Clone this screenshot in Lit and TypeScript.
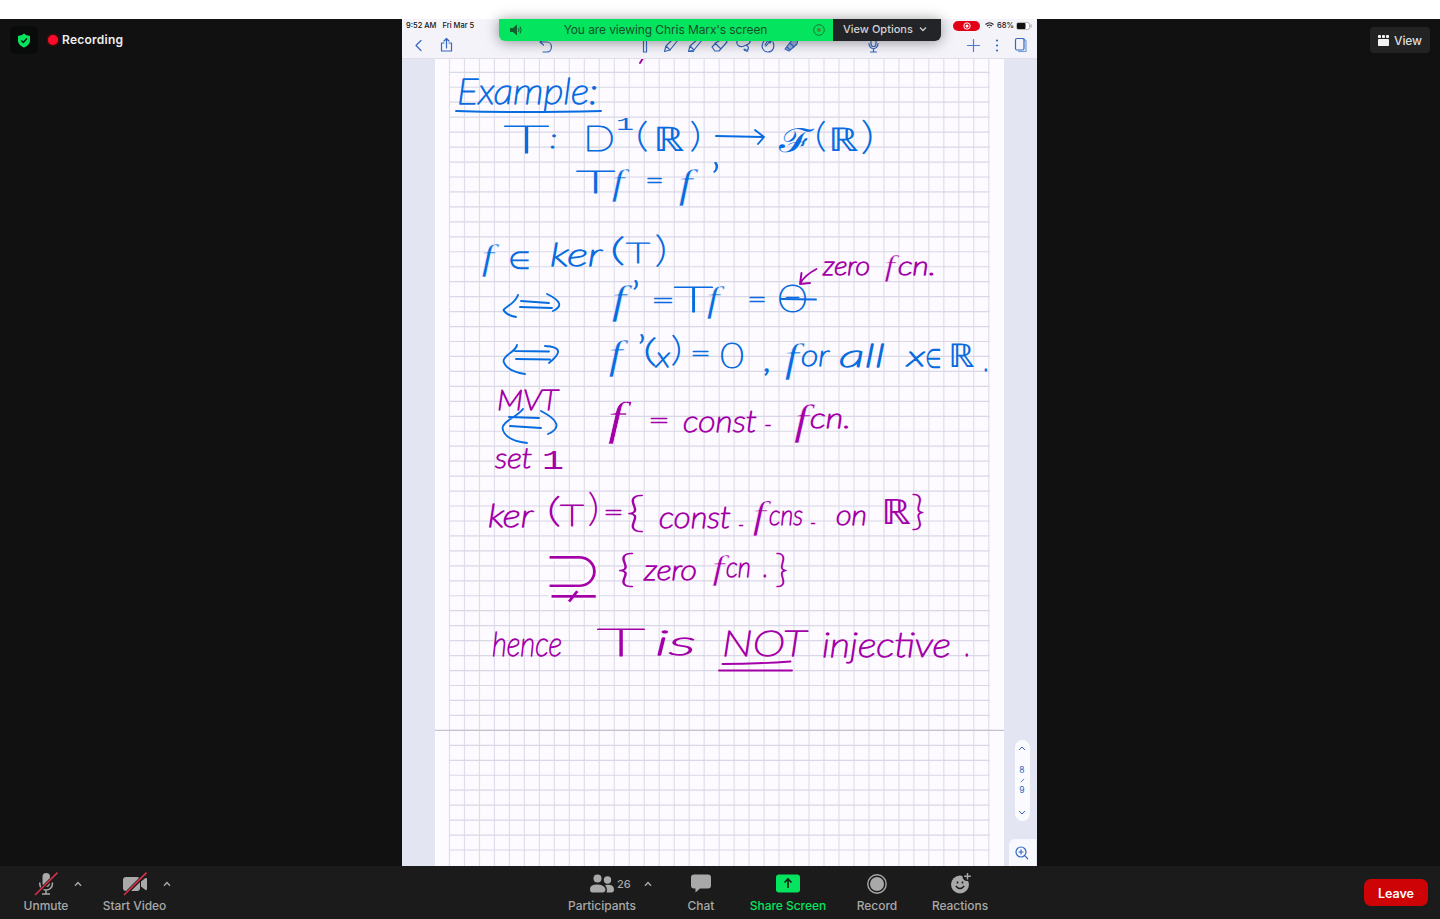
import { LitElement, html, css, svg } from "lit";
import { customElement } from "lit/decorators.js";

type Ink = [text: string, x: number, baseline: number, size: number, width: number, font?: string];

const BLUE: Ink[] = [
  ["Example:", 457, 104, 35, 141],
  ["T", 504, 153, 38, 45, "upright"], [":", 550, 148, 26, 7],
  ["D", 583, 151, 35, 32, "upright"], ["1", 616, 130, 19, 18, "mono"],
  ["(", 636, 147, 34, 12, "upright"], ["ℝ", 653, 151, 34, 31, "math"], [")", 690, 147, 34, 11, "upright"],
  ["ℱ", 779, 152, 33, 34, "math"], ["(", 815, 147, 34, 11, "upright"], ["ℝ", 828, 151, 33, 31, "math"], [")", 861, 149, 38, 13, "upright"],
  ["T", 576, 193, 32, 39, "upright"], ["f", 610, 194, 36, 22, "serif"], ["=", 645, 190, 27, 19, "upright"], ["f", 677, 197, 39, 22, "serif"], ["’", 709, 194, 42, 13, "upright"],
  ["f", 480, 269, 35, 21, "serif"], ["∈", 508, 269, 25, 23, "math"], ["ker", 550, 266, 31, 52],
  ["(", 610, 261, 31, 15, "upright"], ["T", 626, 263, 28, 24, "upright"], [")", 655, 262, 35, 12, "upright"],
  ["f", 610, 313, 41, 22, "serif"], ["’", 630, 309, 38, 11, "upright"], ["=", 651, 310, 27, 24, "upright"], ["T", 674, 312, 36, 39, "upright"],
  ["f", 705, 311, 36, 23, "serif"], ["=", 747, 309, 27, 20, "upright"], ["Θ", 777, 312, 37, 31, "upright"],
  ["f", 607, 368, 39, 25, "serif"], ["’", 636, 363, 38, 11, "upright"], ["(", 643, 362, 31, 14, "upright"], ["x", 656, 367, 28, 14], [")", 671, 361, 34, 11, "upright"],
  ["=", 690, 363, 27, 21, "upright"], ["0", 720, 368, 35, 24, "upright"], [",", 764, 371, 34, 8], ["f", 783, 371, 40, 21, "serif"], ["or", 801, 366, 29, 28],
  ["all", 839, 367, 31, 46], ["x", 907, 366, 27, 18], ["∈", 925, 368, 27, 17, "math"], ["ℝ", 948, 367, 33, 27, "math"], [".", 984, 371, 30, 5],
];

const MAGENTA: Ink[] = [
  ["zero", 823, 275, 25, 47], ["f", 883, 276, 30, 13, "serif"], ["cn.", 898, 275, 25, 38],
  ["MVT", 497, 410, 28, 61], ["set", 495, 468, 28, 37], ["1", 542, 469, 27, 22, "mono"],
  ["f", 606, 434, 47, 32, "serif"], ["=", 648, 430, 27, 22, "upright"],
  ["const", 683, 432, 30, 74], ["-", 764, 433, 24, 8], ["f", 792, 434, 42, 19, "serif"], ["cn.", 810, 428, 27, 41],
  ["ker", 488, 527, 31, 45], ["(", 547, 522, 33, 14, "upright"], ["T", 560, 526, 29, 24, "upright"], [")", 588, 521, 37, 11, "upright"], ["=", 603, 522, 27, 21, "upright"],
  ["{", 626, 527, 42, 19, "upright"], ["const", 659, 528, 29, 72], ["-", 738, 532, 22, 6], ["f", 751, 528, 37, 18, "serif"],
  ["cns", 769, 525, 28, 34], ["-", 810, 530, 22, 6], ["on", 836, 525, 27, 31], ["ℝ", 881, 524, 35, 30, "math"], ["}", 911, 525, 40, 14, "upright"],
  ["⊋", 541, 599, 72, 64, "math eroded"], ["{", 617, 582, 38, 18, "upright"], ["zero", 644, 580, 27, 53], ["f", 711, 579, 34, 16, "serif"],
  ["cn", 726, 577, 27, 25], [".", 763, 577, 30, 5], ["}", 775, 582, 38, 13, "upright"],
  ["hence", 492, 656, 33, 70], ["T", 597, 656, 38, 48, "upright"], ["is", 655, 655, 33, 41], ["NOT", 722, 656, 36, 84],
  ["injective", 822, 657, 33, 129], [".", 965, 656, 32, 5],
];

const ink = (list: Ink[]) => list.map(([t, x, y, size, w, font = "hand"]) =>
  font === "serif"
    ? svg`<text class="serif" x=${x + size * 0.04} y=${y} font-size=${size} textLength=${size * 0.36} lengthAdjust="spacingAndGlyphs">${t}</text>`
    : svg`<text class=${font} x=${x} y=${y} font-size=${size} textLength=${w} lengthAdjust="spacingAndGlyphs">${t}</text>`);

const caret = html`<svg class="caret" width="8" height="6" viewBox="0 0 8 6"><path d="M1 4.8 4 1.6l3 3.2" fill="none" stroke="currentColor" stroke-width="1.4"/></svg>`;

@customElement("ink-page")
class InkPage extends LitElement {
  static styles = css`
    :host { display: block; width: 569px; height: 807px; background: #fdfbff; }
    svg { display: block; }
    .hand, .upright { font-family: Lato, "Open Sans", sans-serif; font-weight: 200; stroke-width: 1.4; stroke-linejoin: round; }
    .upright { stroke-width: 1.1; }
    .hand { font-style: italic; }
    .serif { font-family: "Liberation Serif", serif; font-style: italic; stroke: #fdfbff; stroke-width: .5; }
    .math { font-family: "DejaVu Sans", sans-serif; font-weight: 200; stroke: none; }
    .mono { font-family: "Liberation Mono", monospace; stroke: none; }
    .eroded { stroke: #fdfbff; stroke-width: 2.6; }
    .blue { fill: #086ce0; stroke: #086ce0; }
    .magenta { fill: #a300a8; stroke: #a300a8; }
    .stroke { fill: none; stroke-width: 1.9; stroke-linecap: round; stroke-linejoin: round; }
    .sb { stroke: #086ce0; }
    .sm { stroke: #a300a8; }
  `;
  render() {
    const rows = Array.from({ length: 53 }, (_, i) => 72.3 + i * 14.956);
    const cols = Array.from({ length: 37 }, (_, i) => 449.5 + i * 14.98);
    return html`<svg width="569" height="807" viewBox="435 59 569 807">
      ${cols.map((x) => svg`<path d="M${x} 59V866" stroke="#e1deeb" stroke-width="1.2"/>`)}
      ${rows.map((y) => svg`<path d="M449 ${y}H989.5" stroke="#d8d8e7" stroke-width="1.2"/>`)}
      <path d="M435 730.3H1004" stroke="#c3c4ce" stroke-width="1.2"/>
      <g class="blue">${ink(BLUE)}</g>
      <g class="magenta">${ink(MAGENTA)}</g>
      <g class="stroke sb">
        <path d="M456 111Q520 113 601 111"/>
        <path d="M716 136L763 137M755 130L764 137L758 144"/>
        <path d="M518 295C515 304 506 306 503.500 310Q506 315 516 317M521 301L549 303M520 307L552 308M547 294Q568 304 553 311"/>
        <path d="M517 345C516 352 504 354 503.500 361Q506 371 525 374M515 351L549 351.500M516 359L550 359.500M545 346Q569 347 549 363"/>
        <path d="M523 409C517 417 503 421 502.500 428Q504 440 527 443M509 417L539 418M510 426L541 428M541 411Q568 425 548 434"/>
        <path d="M781 299L816 299.500"/>
      </g>
      <g class="stroke sm">
        <path d="M642.500 59L640 63"/>
        <path d="M816.500 269Q805 275 800.500 283M801.500 273L800 284L810 283"/>
        <path d="M722.500 664Q755 664 790.500 661.500M719 670.500H792"/>
      </g>
    </svg>`;
  }
}

@customElement("app-root")
class AppRoot extends LitElement {
  static styles = css`
    :host { display: flex; flex-direction: column; width: 1440px; height: 919px; background: #111; color: #fff; font-family: Inter, sans-serif; overflow: hidden; }
    * { box-sizing: border-box; }
    svg { display: block; flex: none; }
    .strip { height: 19px; background: #fff; flex: none; }
    .stage { display: grid; grid-template-columns: 402px 635px 403px; height: 847px; background: #111; }
    .left { display: flex; align-items: flex-start; padding: 7px 10px; }
    .shield { width: 28px; height: 28px; border-radius: 5px; background: #080b09; display: grid; place-items: center; }
    .rec { display: flex; align-items: center; gap: 4px; height: 27px; margin-left: 10px; font-size: 12px; font-weight: 600; letter-spacing: .25px; color: #eee; }
    .dot { width: 10px; height: 10px; border-radius: 50%; background: #ff0a2b; box-shadow: 0 0 3px #f00a; }
    .right { display: flex; justify-content: flex-end; align-items: flex-start; padding: 8px 10px; }
    .view { display: flex; align-items: center; gap: 5px; width: 60px; height: 26px; padding: 1px 0 0 8px; border-radius: 4px; background: #232323; font-size: 12px; font-weight: 500; letter-spacing: -.1px; color: #ddd; }
    .share { position: relative; display: flex; flex-direction: column; background: #e3e5f3; }
    .chrome { height: 40px; background: #f4f3fa; border-bottom: 1px solid #dfdfe8; color: #111; }
    .status { display: flex; align-items: center; height: 13px; padding: 0 4px; font-size: 7.5px; font-weight: 500; gap: 6px; }
    .status .sig { margin-left: auto; display: flex; align-items: center; gap: 3px; padding-right: 2px; }
    .pill { display: grid; place-items: center; width: 27px; height: 10px; border-radius: 5px; background: #e30016; margin-right: 2px; }
    .batt { margin-right: -1px; }
    .sig .pct { margin-right: -1px; }
    .body { display: flex; flex: 1; }
    .gutter { width: 33px; }
    .gutter.end { display: flex; flex-direction: column; align-items: center; padding: 681px 0 0 3px; }
    .pager { width: 15px; height: 81px; border-radius: 8px; background: #fbfbff; display: flex; flex-direction: column; align-items: center; justify-content: space-between; padding: 6px 0; color: #2a66bd; font-size: 8.500px; line-height: 11px; }
    .pages { display: flex; flex-direction: column; align-items: center; gap: 2px; }
    .zoom { display: grid; place-items: center; width: 27px; height: 27px; margin-top: 18px; border-radius: 6px 0 0 0; background: #f8f8ff; }
    .banner { position: absolute; left: 97px; top: 0; width: 442px; height: 22px; display: flex; border-radius: 0 0 6px 6px; box-shadow: 0 1px 14px rgba(0,0,0,.42); font-size: 12px; }
    .msg { display: flex; align-items: center; justify-content: space-between; width: 334px; padding: 0 8px 0 11px; background: #05e45e; color: #17502d; border-bottom-left-radius: 6px; white-space: nowrap; letter-spacing: -.1px; }
    .msg span { margin: -1px 5px 0 0; }
    .opts { display: flex; align-items: center; gap: 6px; flex: 1; padding: 0 0 2px 10px; background: #232427; color: #d2d2d4; border-bottom-right-radius: 6px; font-size: 11px; letter-spacing: 0; font-weight: 500; white-space: nowrap; }
    .bar { display: flex; height: 53px; background: #1b1b1b; color: #a9a9a9; }
    .tool { display: flex; flex-direction: column; padding-top: 4px; font-size: 12px; font-weight: 500; line-height: 18px; text-align: center; letter-spacing: -.04px; white-space: nowrap; }
    .row { display: grid; grid-template-columns: 1fr auto 1fr; align-items: center; height: 27px; }
    .row .mid { grid-column: 2; }
    .after { display: flex; align-items: center; text-align: left; font-size: 11px; }
    .after .caret { margin-left: 16px; }
    .count .after .caret { margin-left: 13px; }
    .tool.count .after { padding-left: 3px; }
    .w92 { width: 92px; } .w85 { width: 85px; } .w133 { width: 133px; margin-left: 358.5px; } .w65 { width: 65px; }
    .w109 { width: 109px; color: #05e45e; } .w69 { width: 69px; } .w97 { width: 97px; }
    .leave { margin: 13px 12px 0 auto; width: 64px; height: 27px; border-radius: 7px; background: #cd0306; color: #fff; font-size: 12.500px; font-weight: 600; display: grid; place-items: center; padding-top: 1px; }
  `;

  chromeIcons() {
    return html`<svg width="635" height="26" viewBox="402 32 635 26" fill="none" stroke="#3569bd" stroke-width="1.2" stroke-linecap="round" stroke-linejoin="round">
      <path d="M421 40.500 416 45.500l5 5"/>
      <path d="M444 43h-2.500v8h10v-8H449M446.500 48v-9M444 41l2.500-2.500L449 41"/>
      <path d="M543.500 39 540 42l3.500 3M540.500 42h6.500a4 4.500 0 0 1 0 10h-4"/>
      <path d="M643.500 39v13h3V39"/>
      <path d="M664.500 51.500 666 46l6-6 6 0-8 10-5.500 1.500M666 46l4 4"/>
      <path d="M688.500 51.500 690 46l8-7 4 1-8 10-5.500 1.500M690 46l4 4M688.500 51.500h5"/>
      <path d="M712 47l5-5 8-4 2 4-8 9h-4zM715 43l5 5"/>
      <path d="M737 41c-1 4 3 7 7 5 5-2 7-3 6-7M745 45.500a2.500 2.500 0 1 1-1 4M745 49c1 3 1 2 3 2"/>
      <path d="M764 41c-4 5-1 11 4 11s7-5 5-10M765 45l3-5 2 3 2-3M766 46l4-5"/>
      <path d="M785 49l7-9 6-1-1 5-8 7zM787 47l3 3M790 43l4 4" fill="#9fb4e0"/>
      <path d="M871 39v5a2.500 2.500 0 0 0 5 0v-5M869 43.500a4.500 5 0 0 0 9 0M873.500 48.500v3.500M870.500 52h6"/>
      <path d="M967.500 45.500h12M973.500 39.500v12" stroke="#4d7dcc"/>
      <g fill="#3569bd" stroke="none"><circle cx="997" cy="40.500" r="1.100"/><circle cx="997" cy="45.500" r="1.100"/><circle cx="997" cy="50.500" r="1.100"/></g>
      <path d="M1017 38.500h6.500l2.500 2.500v10.500h-7.500" stroke="#6d9ee0"/><rect x="1015.500" y="38.500" width="8.500" height="11.500" rx="1.500" fill="#f4f3fa"/>
    </svg>`;
  }

  render() {
    return html`
      <div class="strip"></div>
      <div class="stage">
        <div class="left">
          <div class="shield"><svg width="14" height="15" viewBox="0 0 14 15"><path d="M7 .5 9 2l4 1v4.500c0 3.500-2.500 5.500-6 7-3.500-1.500-6-3.500-6-7V3l4-1z" fill="#05e45e"/><path d="M4.300 7.500 6.300 9.500 9.900 5.500" fill="none" stroke="#08170d" stroke-width="1.500"/></svg></div>
          <div class="rec"><span class="dot"></span><span>Recording</span></div>
        </div>
        <div class="share">
          <div class="chrome">
            <div class="status"><span>9:52 AM</span><span>Fri Mar 5</span>
              <span class="sig"><span class="pill"><svg width="8" height="8" viewBox="0 0 8 8"><circle cx="4" cy="4" r="3.200" fill="none" stroke="#fff"/><circle cx="4" cy="4" r="1.500" fill="#fff"/></svg></span>
                <svg width="9" height="7" viewBox="0 0 9 7" fill="none" stroke="#222" stroke-width="1.200"><path d="M.5 2.500Q4.500-1 8.500 2.500M2 4Q4.500 2 7 4"/><path d="M3.500 5.200h2L4.500 6.300z" fill="#222" stroke="none"/></svg>
                <span class="pct">68%</span>
                <svg class="batt" width="16" height="8" viewBox="0 0 16 8"><rect x=".5" y=".5" width="13" height="7" rx="2" fill="#fff" stroke="#999" stroke-width=".7"/><rect x="1" y="1" width="8.500" height="6" rx="1" fill="#111"/><path d="M15 2.500v3" stroke="#999"/></svg>
              </span>
            </div>
            ${this.chromeIcons()}
          </div>
          <div class="body">
            <div class="gutter"></div>
            <ink-page></ink-page>
            <div class="gutter end">
              <div class="pager">
                <svg width="8" height="5" viewBox="0 0 8 5"><path d="M1 4l3-3 3 3" fill="none" stroke="#3569bd"/></svg>
                <div class="pages"><span>8</span><svg width="5" height="5" viewBox="0 0 6 6"><path d="M1 5l4-4" stroke="#3569bd"/></svg><span>9</span></div>
                <svg width="8" height="5" viewBox="0 0 8 5"><path d="M1 1l3 3 3-3" fill="none" stroke="#3569bd"/></svg>
              </div>
              <div class="zoom"><svg width="14" height="14" viewBox="0 0 14 14" fill="none" stroke="#3569bd" stroke-width="1.200"><circle cx="6" cy="6" r="5"/><path d="M3.500 6h5M6 3.500v5M9.700 9.700 13 13"/></svg></div>
            </div>
          </div>
          <div class="banner">
            <div class="msg">
              <svg width="13" height="12" viewBox="0 0 13 12"><path d="M0 4h3l4-3.500v11L3 8H0z" fill="#12602d"/><path d="M8.500 4q1.200 2 0 4M10 2.500q2.400 3.500 0 7" fill="none" stroke="#12602d"/></svg>
              <span>You are viewing Chris Marx's screen</span>
              <svg width="12" height="12" viewBox="0 0 12 12"><circle cx="6" cy="6" r="5.300" fill="none" stroke="#127a35"/><circle cx="6" cy="6" r="2" fill="#4a8c34"/></svg>
            </div>
            <div class="opts"><span>View Options</span><svg width="8" height="6" viewBox="0 0 8 6"><path d="M1 1.500 4 4.500l3-3" fill="none" stroke="#c8c8ca" stroke-width="1.400"/></svg></div>
          </div>
        </div>
        <div class="right"><div class="view"><svg width="11" height="11" viewBox="0 0 11 11" fill="#f2f2f2"><rect width="3" height="3" rx=".8"/><rect x="4" width="3" height="3" rx=".8"/><rect x="8" width="3" height="3" rx=".8"/><rect y="4" width="11" height="7" rx=".8"/></svg><span>View</span></div></div>
      </div>
      <div class="bar">
        <div class="tool w92"><div class="row"><svg class="mid" width="24" height="25" viewBox="0 0 24 25"><rect x="8.500" y="2" width="7.500" height="14" rx="3.700" fill="#a9a9a9"/><path d="M5.800 11.500v1.500a6.300 6 0 0 0 12.600 0v-1.500M12 19v4M8 23h8" fill="none" stroke="#a9a9a9" stroke-width="1.500"/><path d="M1 24.500 24 1.500" stroke="#1b1b1b" stroke-width="3.600"/><path d="M1 24 23.500 1.500" stroke="#d9304a" stroke-width="1.600"/></svg><span class="after">${caret}</span></div><span>Unmute</span></div>
        <div class="tool w85"><div class="row"><svg class="mid" width="24" height="25" viewBox="0 0 24 25"><rect y="6" width="17" height="14" rx="3" fill="#a9a9a9"/><path d="M18 10.500 22.500 7q1.500-.5 1.500 1v10q0 1.500-1.500 1L18 15.500z" fill="#a9a9a9"/><path d="M1 24.500 24 1.500" stroke="#1b1b1b" stroke-width="3.600"/><path d="M1 24 23.500 1.500" stroke="#d9304a" stroke-width="1.600"/></svg><span class="after">${caret}</span></div><span>Start Video</span></div>
        <div class="tool count w133"><div class="row"><svg class="mid" width="24" height="19" viewBox="0 0 24 19" fill="#a9a9a9"><circle cx="7.500" cy="4.500" r="4"/><circle cx="17.500" cy="6" r="3.700"/><path d="M0 15q0-4.500 7-4.500t8.500 4.500q0 3.500-3 3.500h-10Q0 18.500 0 15zM15 11q9-1.500 9 4.500 0 3-2.500 3h-5q1.500-4-1.500-7.500z"/></svg><span class="after"><span>26</span>${caret}</span></div><span>Participants</span></div>
        <div class="tool w65"><div class="row"><svg class="mid" width="20" height="19" viewBox="0 0 20 19"><path d="M3 .5h14q3 0 3 3v8q0 3-3 3h-8l-4.500 4v-4H3q-3 0-3-3v-8q0-3 3-3z" fill="#a9a9a9"/></svg></div><span>Chat</span></div>
        <div class="tool w109"><div class="row"><svg class="mid" width="24" height="19" viewBox="0 0 24 19"><rect y=".5" width="24" height="18" rx="3" fill="#05e45e"/><path d="M12 14V5M8.500 8.500 12 5l3.500 3.500" fill="none" stroke="#17251b" stroke-width="1.700"/></svg></div><span>Share Screen</span></div>
        <div class="tool w69"><div class="row"><svg class="mid" width="20" height="20" viewBox="0 0 20 20"><circle cx="10" cy="10" r="9.200" fill="none" stroke="#a9a9a9" stroke-width="1.400"/><circle cx="10" cy="10" r="7" fill="#a9a9a9"/></svg></div><span>Record</span></div>
        <div class="tool w97"><div class="row"><svg class="mid" width="22" height="23" viewBox="0 0 22 23"><circle cx="11" cy="12.500" r="9" fill="#a9a9a9"/><circle cx="18" cy="4.500" r="4.500" fill="#1b1b1b"/><path d="M18.500 1v6.500M15.200 4.200h6.600" stroke="#a9a9a9" stroke-width="1.400"/><path d="M8.500 9.500v2M13.500 9.500v2M6.800 14q4.200 5 8.400 0" stroke="#1b1b1b" stroke-width="1.500" fill="none"/></svg></div><span>Reactions</span></div>
        <div class="leave">Leave</div>
      </div>`;
  }
}
